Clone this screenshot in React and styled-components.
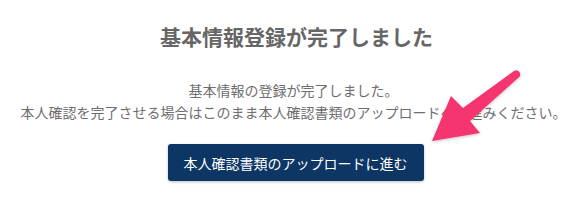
import React from 'react';
import styled, { createGlobalStyle } from 'styled-components';

const GlobalStyle = createGlobalStyle`
  html, body {
    margin: 0;
    padding: 0;
    background: #ffffff;
  }
  body {
    font-family: "Noto Sans CJK JP", "Noto Sans", sans-serif;
  }
`;

const Page = styled.div`
  position: relative;
  width: 587px;
  height: 206px;
  display: flex;
  flex-direction: column;
  align-items: center;
  padding-top: 26px;
  box-sizing: border-box;
  overflow: hidden;
`;

const Title = styled.h1`
  margin: 0 0 0 6px;
  font-size: 21px;
  line-height: 21px;
  font-weight: 700;
  color: #666666;
`;

const Message = styled.p`
  margin: 32px 0 0;
  font-size: 14px;
  line-height: 22px;
  color: #6e6e6e;
  text-align: center;
`;

const Button = styled.button`
  margin: 21px 0 0 4px;
  height: 37px;
  padding: 0 16px;
  border: none;
  border-radius: 3px;
  background: #0d3664;
  color: #ffffff;
  font-family: inherit;
  font-size: 14px;
  box-shadow: 0 1px 3px rgba(0, 0, 0, 0.25);
  cursor: pointer;
`;

const Overlay = styled.svg`
  position: absolute;
  inset: 0;
  pointer-events: none;
`;

const Arrow = () => (
  <Overlay width="587" height="206" viewBox="0 0 587 206">
    <defs>
      <filter id="arrowShadow" x="-20%" y="-20%" width="140%" height="140%">
        <feDropShadow dx="0" dy="1" stdDeviation="1.5" floodColor="#000" floodOpacity="0.25" />
      </filter>
    </defs>
    <path
      d="M432 141 L451 96 L463 108 L514 71 Q518 69 520 73 Q521 76 518 78 L470 121 L480 133 Z"
      fill="#f4346f"
      filter="url(#arrowShadow)"
    />
  </Overlay>
);

const App = () => (
  <Page>
    <GlobalStyle />
    <Title>基本情報登録が完了しました</Title>
    <Message>
      基本情報の登録が完了しました。
      <br />
      本人確認を完了させる場合はこのまま本人確認書類のアップロードへお進みください。
    </Message>
    <Button>本人確認書類のアップロードに進む</Button>
    <Arrow />
  </Page>
);

export default App;
